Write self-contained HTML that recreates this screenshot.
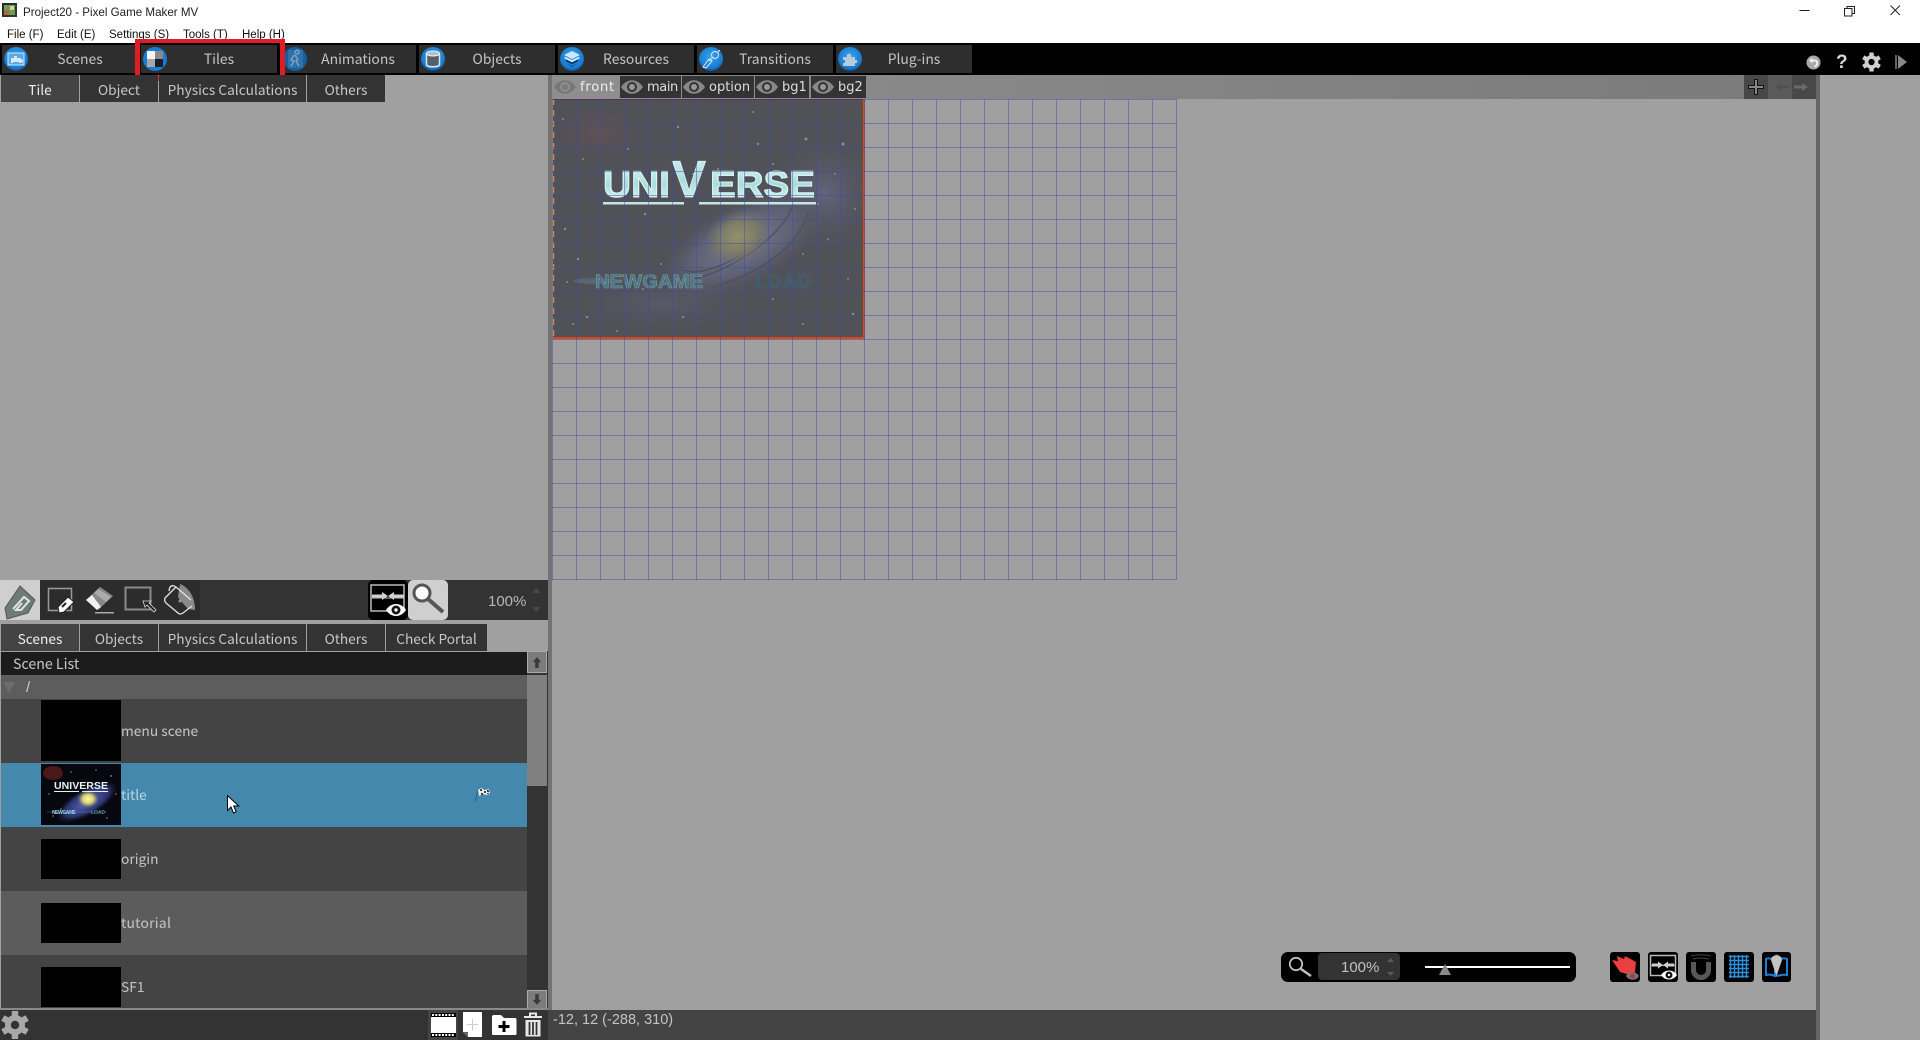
<!DOCTYPE html>
<html lang="en">
<head>
<meta charset="utf-8">
<title>Project20 - Pixel Game Maker MV</title>
<style>
html,body{margin:0;padding:0;width:1920px;height:1040px;overflow:hidden;background:#a0a0a0;font-family:"Liberation Sans",sans-serif}
div,span,svg{position:absolute;box-sizing:border-box}
.t{white-space:nowrap;line-height:1}
.menu{top:28px;font-size:11.500px;color:#111;line-height:15px;white-space:nowrap;font-family:"Liberation Sans",sans-serif}
.tab{top:45px;height:28px;width:136px;background:#2e2e2e}
.tab span{top:0;left:38px;width:80px;text-align:center;color:#c4c4c4;font:13.900px/28px "Noto Sans CJK JP","Liberation Sans",sans-serif;white-space:nowrap}
.ic{top:47px;width:24px;height:24px}
.sub{height:27px;background:#333;color:#c8c8c8;text-align:center;font:13.700px/28px "Noto Sans CJK JP","Liberation Sans",sans-serif;white-space:nowrap}
.lay{top:76px;height:22px;background:#333;color:#ddd;font:13px/21px "DejaVu Sans",sans-serif;white-space:nowrap}
.lay span{top:1px;line-height:21px}
.lay svg{top:3px;left:0;width:24px;height:16px}
.row{left:1px;width:526px}
.row span{left:120px;top:0;font:13.800px "Noto Sans CJK JP","Liberation Sans",sans-serif;color:#c6c6c6;white-space:nowrap}
.th{left:40px;width:80px;background:#000}
.btn{top:952px;width:30px;height:30px;background:#000;border-radius:3px}
</style>
</head>
<body>
<svg width="0" height="0" style="left:0;top:0">
<defs>
<radialGradient id="blue" cx="50%" cy="40%" r="60%"><stop offset="0" stop-color="#3aa4ee"/><stop offset=".8" stop-color="#1a7bd0"/><stop offset="1" stop-color="#0d4f96"/></radialGradient>
<linearGradient id="uni" x1="0" y1="0" x2="0" y2="1"><stop offset="0" stop-color="#d8f4f4"/><stop offset=".5" stop-color="#a8dcdc"/><stop offset="1" stop-color="#e6fafa"/></linearGradient>
<radialGradient id="gal" cx="50%" cy="50%" r="50%"><stop offset="0" stop-color="#75788c"/><stop offset=".6" stop-color="#5e6174"/><stop offset="1" stop-color="#55566000"/></radialGradient>
<radialGradient id="core" cx="50%" cy="50%" r="50%"><stop offset="0" stop-color="#93916c"/><stop offset=".55" stop-color="#7d7c68"/><stop offset="1" stop-color="#6a6a7000"/></radialGradient>
<radialGradient id="neb" cx="50%" cy="50%" r="50%"><stop offset="0" stop-color="#666a88"/><stop offset="1" stop-color="#55566000"/></radialGradient>
<radialGradient id="red" cx="50%" cy="50%" r="50%"><stop offset="0" stop-color="#625256"/><stop offset="1" stop-color="#55505400"/></radialGradient>
<radialGradient id="gal2" cx="50%" cy="50%" r="50%"><stop offset="0" stop-color="#5a68c0"/><stop offset=".7" stop-color="#2a3068"/><stop offset="1" stop-color="#0a0a1800"/></radialGradient>
<radialGradient id="core2" cx="50%" cy="50%" r="50%"><stop offset="0" stop-color="#fffcb0"/><stop offset=".5" stop-color="#d8d070"/><stop offset="1" stop-color="#80805000"/></radialGradient>
</defs>
</svg>

<!-- Title bar -->
<div style="left:0;top:0;width:1920px;height:43px;background:#fff"></div>
<svg style="left:2px;top:3px" width="15" height="14" viewBox="0 0 15 14"><rect width="15" height="14" fill="#2c3a2c"/><rect x="2" y="2" width="11" height="10" fill="#6f9a58"/><rect x="2" y="7" width="5" height="5" fill="#a86a38"/><rect x="8" y="3" width="4" height="4" fill="#d8d0a0"/><path d="M0 0v14M3 0v2M6 0v2M9 0v2M12 0v2" stroke="#111"/></svg>
<div class="t" style="left:23px;top:6px;font-size:11.600px;line-height:14px;color:#222">Project20 - Pixel Game Maker MV</div>
<div class="menu" style="left:7px">File (F)</div>
<div class="menu" style="left:57px">Edit (E)</div>
<div class="menu" style="left:109px">Settings (S)</div>
<div class="menu" style="left:183px">Tools (T)</div>
<div class="menu" style="left:242px">Help (H)</div>
<svg style="left:1790px;top:0" width="130" height="24" viewBox="0 0 130 24" fill="none" stroke="#222" stroke-width="1"><path d="M9.500 10.500h10"/><rect x="54.500" y="8.500" width="7.500" height="7.500" fill="#fff"/><path d="M57 8.500V6.500h7.500V13.500H62"/><path d="M100.500 5.500l9.500 9.500M110 5.500l-9.500 9.500"/></svg>

<!-- Black toolbar -->
<div style="left:0;top:43px;width:1920px;height:32px;background:#000"></div>
<div class="tab" style="left:2px"><span>Scenes</span></div>
<div class="tab" style="left:141px"><span>Tiles</span></div>
<div class="tab" style="left:280px"><span>Animations</span></div>
<div class="tab" style="left:419px"><span>Objects</span></div>
<div class="tab" style="left:558px"><span>Resources</span></div>
<div class="tab" style="left:697px"><span>Transitions</span></div>
<div class="tab" style="left:836px"><span>Plug-ins</span></div>

<svg class="ic" style="left:4px" viewBox="0 0 24 24"><circle cx="12" cy="12" r="12" fill="url(#blue)"/><rect x="4" y="6" width="16" height="12" fill="#5aa8e4" stroke="#cfe9fb"/><path d="M7 16v-5h3v-2h3v2h4v2l2-1v4l-2-1v1h-2v-1h-6v1z" fill="#d8eafa"/></svg>
<svg class="ic" style="left:143px" viewBox="0 0 24 24"><circle cx="12" cy="12" r="12" fill="#1a7bd0"/><rect x="4" y="4" width="8" height="8" fill="#f4f4f4"/><rect x="12" y="4" width="8" height="8" fill="#8a8a8a"/><rect x="4" y="12" width="8" height="8" fill="#a8a8a8"/><rect x="12" y="12" width="8" height="8" fill="#1d1d2a"/></svg>
<svg class="ic" style="left:283px" viewBox="0 0 24 24"><circle cx="12" cy="12" r="12" fill="#14609f"/><rect x="5" y="3" width="15" height="18" fill="#2f72aa"/><path d="M12 5a2 2 0 1 1 0 .1M11 8l-3 5 3 1-3 5M12 8l3 5-2 1 3 5" stroke="#7ea6c6" stroke-width="1.400" fill="none"/></svg>
<svg class="ic" style="left:421px" viewBox="0 0 24 24"><circle cx="12" cy="12" r="12" fill="url(#blue)"/><path d="M5.500 6.500v11c0 3 13 3 13 0v-11" fill="#54606c" stroke="#dfe7ee" stroke-width="1.500"/><ellipse cx="12" cy="6.500" rx="6.500" ry="2.500" fill="#b4bec8" stroke="#eef2f6"/></svg>
<svg class="ic" style="left:560px" viewBox="0 0 24 24"><circle cx="12" cy="12" r="12" fill="url(#blue)"/><path d="M12 4l8 4-8 4-8-4z" fill="#cfe6f7"/><path d="M4 11l8 4 8-4-1.500-1-6.500 3.200L5.500 10z" fill="#e8f4fc"/><path d="M5 14l7 3.500 7-3.500-2-1-5 2.500L7 13z" fill="#0e3b66"/><path d="M6 16l6 3 6-3-6 4z" fill="#0e3b66"/></svg>
<svg class="ic" style="left:699px" viewBox="0 0 24 24"><circle cx="12" cy="12" r="12" fill="url(#blue)"/><g fill="none" stroke="#d8ecfa" stroke-width="1"><path d="M4 20l6-8 3 2-6 7z"/><circle cx="16" cy="8" r="3.500"/><path d="M13 11l-3 3M19 5l2-2"/></g></svg>
<svg class="ic" style="left:838px" viewBox="0 0 24 24"><circle cx="12" cy="12" r="12" fill="url(#blue)"/><path d="M5 10h4v-1c-1-3 5-3 4 0v1h4v3c3-1 3 4 0 3v3h-12v-3c3 1 3-4 0-3z" fill="#b8cbdb"/></svg>

<!-- Red highlight -->
<div style="left:135px;top:39px;width:150px;height:42px;border:solid #e01c24;border-width:4px 5px 5px 5px"></div>

<!-- Right icons in toolbar -->
<svg style="left:1806px;top:55px" width="15" height="15" viewBox="0 0 15 15"><circle cx="7.500" cy="7.500" r="7" fill="#a8a8a8"/><path d="M4 5.500h5c3 0 3 5-.5 6" fill="none" stroke="#eee" stroke-width="2"/><path d="M6.500 2.500v6L3 5.500z" fill="#eee"/></svg>
<div class="t" style="left:1836px;top:52px;font:bold 19px/22px 'Liberation Sans',sans-serif;color:#d8d8d8">?</div>
<svg style="left:1862px;top:52px" width="19" height="20" viewBox="-10 -10 20 20"><g fill="#d0d0d0"><circle r="7.200"/><rect x="-2.300" y="-10" width="4.600" height="20"/><rect x="-2.300" y="-10" width="4.600" height="20" transform="rotate(60)"/><rect x="-2.300" y="-10" width="4.600" height="20" transform="rotate(120)"/></g><circle r="3.300" fill="#000"/></svg>
<svg style="left:1895px;top:54px" width="13" height="16" viewBox="0 0 13 16"><rect x="0" y="1" width="2" height="14" fill="#666"/><path d="M3 1l9 7-9 7z" fill="#888"/></svg>

<!-- Left top area -->
<div class="sub" style="left:1px;top:75px;width:78px;background:#444;color:#eee">Tile</div>
<div class="sub" style="left:80px;top:75px;width:78px">Object</div>
<div class="sub" style="left:159px;top:75px;width:147px">Physics Calculations</div>
<div class="sub" style="left:307px;top:75px;width:78px">Others</div>

<!-- Divider -->
<div style="left:548px;top:75px;width:4px;height:935px;background:#737373"></div>

<!-- Layer tabs row -->
<div style="left:552px;top:75px;width:1264px;height:24px;background:linear-gradient(90deg,#8e8e8e,#7a7a7a)"></div>
<div class="lay" style="left:553px;width:65px;background:#8e8e8e;color:#f0f0f0"><svg viewBox="0 0 24 16"><path d="M1 8c6-9 16-9 22 0-6 9-16 9-22 0z" fill="#777"/><circle cx="12" cy="8" r="5" fill="#8e8e8e"/><circle cx="12" cy="8" r="3" fill="#7a7a7a"/></svg><span style="left:27px;letter-spacing:.8px">front</span></div>
<div class="lay" style="left:620px;width:61px"><svg viewBox="0 0 24 16"><path d="M1 8c6-9 16-9 22 0-6 9-16 9-22 0z" fill="#888"/><circle cx="12" cy="8" r="5" fill="#333"/><circle cx="12" cy="8" r="3" fill="#999"/></svg><span style="left:27px;letter-spacing:-.4px">main</span></div>
<div class="lay" style="left:682px;width:72px"><svg viewBox="0 0 24 16"><path d="M1 8c6-9 16-9 22 0-6 9-16 9-22 0z" fill="#888"/><circle cx="12" cy="8" r="5" fill="#333"/><circle cx="12" cy="8" r="3" fill="#999"/></svg><span style="left:27px">option</span></div>
<div class="lay" style="left:755px;width:54px"><svg viewBox="0 0 24 16"><path d="M1 8c6-9 16-9 22 0-6 9-16 9-22 0z" fill="#888"/><circle cx="12" cy="8" r="5" fill="#333"/><circle cx="12" cy="8" r="3" fill="#999"/></svg><span style="left:27px">bg1</span></div>
<div class="lay" style="left:811px;width:55px"><svg viewBox="0 0 24 16"><path d="M1 8c6-9 16-9 22 0-6 9-16 9-22 0z" fill="#888"/><circle cx="12" cy="8" r="5" fill="#333"/><circle cx="12" cy="8" r="3" fill="#999"/></svg><span style="left:27px">bg2</span></div>

<!-- Layer right buttons -->
<div style="left:1744px;top:75px;width:24px;height:24px;background:#484848"></div>
<div style="left:1768px;top:75px;width:24px;height:24px;background:#5a5a5a"></div>
<div style="left:1792px;top:75px;width:24px;height:24px;background:#484848"></div>
<svg style="left:1744px;top:75px" width="72" height="24" viewBox="0 0 72 24"><path d="M10.500 4.500h3v6h6v3h-6v6h-3v-6h-6v-3h6z" fill="#888" stroke="#111"/><path d="M32 12l6-4v2.500h7v3h-7V16z" fill="#505050"/><path d="M64 12l-6-4v2.500h-8v3h8V16z" fill="#6a6a6a"/></svg>

<!-- Right divider -->
<div style="left:1816px;top:75px;width:4px;height:965px;background:#666"></div>

<!-- Canvas image -->
<svg style="left:553px;top:99px" width="312" height="240" viewBox="0 0 312 240">
<rect width="312" height="240" fill="#515158"/>
<ellipse cx="45" cy="33" rx="45" ry="28" fill="url(#red)"/>
<ellipse cx="272" cy="95" rx="55" ry="55" fill="url(#neb)" opacity=".8"/>
<ellipse cx="190" cy="145" rx="95" ry="42" fill="url(#gal)" transform="rotate(-28 190 145)"/>
<ellipse cx="110" cy="205" rx="90" ry="25" fill="url(#neb)" opacity=".4"/>
<path d="M140 180c30-5 90-40 100-75M160 188c35-10 85-35 95-75M128 170c20 10 60-10 80-30" fill="none" stroke="#50515e" stroke-width="1.500"/>
<ellipse cx="185" cy="138" rx="36" ry="27" fill="url(#core)" transform="rotate(-25 185 138)"/>
<g fill="#8a8a92"><circle cx="10" cy="20" r="1"/><circle cx="30" cy="60" r="1"/><circle cx="125" cy="28" r="1.200"/><circle cx="75" cy="50" r="1"/><circle cx="140" cy="75" r="1"/><circle cx="205" cy="45" r="1.200"/><circle cx="220" cy="65" r="1"/><circle cx="253" cy="40" r="1.500"/><circle cx="290" cy="45" r="1.500"/><circle cx="282" cy="75" r="1"/><circle cx="265" cy="105" r="1"/><circle cx="302" cy="110" r="1"/><circle cx="12" cy="130" r="1.200"/><circle cx="25" cy="160" r="1.200"/><circle cx="92" cy="115" r="1.200"/><circle cx="14" cy="183" r="1"/><circle cx="20" cy="225" r="1"/><circle cx="34" cy="218" r="1.200"/><circle cx="64" cy="232" r="1"/><circle cx="130" cy="218" r="1.200"/><circle cx="250" cy="225" r="1"/><circle cx="300" cy="215" r="1.200"/><circle cx="295" cy="180" r="1"/><circle cx="220" cy="200" r="1"/><circle cx="165" cy="70" r="1"/><circle cx="200" cy="13" r="1"/><circle cx="275" cy="140" r="1"/><circle cx="250" cy="155" r="1"/><circle cx="90" cy="190" r="1"/><circle cx="108" cy="165" r="1"/></g>
<text x="50" y="98" font-family="Liberation Sans" font-weight="bold" font-size="37" textLength="67" lengthAdjust="spacingAndGlyphs" fill="url(#uni)" stroke="#d8f4f4" stroke-width="1.100">UNI</text>
<text x="119" y="98" font-family="Liberation Sans" font-weight="bold" font-size="52" textLength="34" lengthAdjust="spacingAndGlyphs" fill="url(#uni)" stroke="#d8f4f4" stroke-width=".8">V</text>
<text x="157" y="98" font-family="Liberation Sans" font-weight="bold" font-size="37" textLength="105" lengthAdjust="spacingAndGlyphs" fill="url(#uni)" stroke="#d8f4f4" stroke-width="1.100">ERSE</text>
<rect x="50" y="103" width="81" height="2.500" fill="#c4e6e8"/>
<rect x="146" y="103" width="117" height="2.500" fill="#c4e6e8"/>
<ellipse cx="42" cy="182" rx="22" ry="3" fill="#5d8a96" opacity=".4"/>
<text x="42" y="189" font-family="Liberation Sans" font-weight="bold" font-size="19" textLength="108" lengthAdjust="spacingAndGlyphs" fill="#4a7383" stroke="#789ea9" stroke-width=".6">NEWGAME</text>
<text x="202" y="189" font-family="Liberation Sans" font-weight="bold" font-size="19" textLength="56" lengthAdjust="spacingAndGlyphs" fill="#40586a" stroke="#4a6878" stroke-width=".6">LOAD</text>
<path d="M.500 0v240" stroke="#e8842a" stroke-width="1.500" stroke-dasharray="6 5"/>
<path d="M0 .500h312" stroke="#6e1e14"/>
<path d="M311 0v240" stroke="#e8420f" stroke-width="2" />
<path d="M0 239h312" stroke="#e8420f" stroke-width="2"/>
</svg>
<!-- Grid -->
<div style="left:552px;top:99px;width:625px;height:481px;background-image:linear-gradient(to right,rgba(60,75,165,.48) 1px,transparent 1px),linear-gradient(to bottom,rgba(60,75,165,.48) 1px,transparent 1px);background-size:24px 24px"></div>

<!-- Left bottom toolbar -->
<div style="left:0;top:580px;width:548px;height:40px;background:#333"></div>
<div style="left:0;top:580px;width:40px;height:40px;background:#cfcfcf"></div>
<div style="left:40px;top:580px;width:160px;height:40px;background:#2c2c2c"></div>
<svg style="left:0;top:580px" width="200" height="40" viewBox="0 0 200 40">
<path d="M5 28L20 6l15 14-7 13-21 6z" fill="#6d7b76" stroke="#555"/><path d="M13 29l11-12 5 4-8 9h-5l6-7" fill="none" stroke="#e4e4e4" stroke-width="2"/>
<rect x="48.500" y="8.500" width="23" height="22" fill="none" stroke="#9a9a9a" stroke-width="1.500"/>
<path d="M58 27l10-10 6 5-10 10-5 1z" fill="#fff" stroke="#222"/><path d="M62 27l4-4" stroke="#222" stroke-width="2"/>
<path d="M86 20l14-13 13 9-14 13z" fill="#888"/><path d="M86 20l6-5 9 12-4 3z" fill="#f2f2f2"/><path d="M98 9l13 8-5 5-12-9z" fill="#aaa"/><rect x="95" y="32" width="19" height="1.500" fill="#aaa"/>
<rect x="125.500" y="7.500" width="25" height="22" fill="none" stroke="#8a8a8a" stroke-width="2"/>
<path d="M143 21l2 6 2-2 7 7 2-2-7-7 2-2z" fill="#222" stroke="#ddd" stroke-width=".8"/>
<path d="M180 4C188 7 195 16 195 30L188 29L180 20L178 17z" fill="#8a8a8a"/>
<path d="M176 7L165 18Q164 21 166 23L178 33Q180 35 183 33L192 26M176 7Q170 3 169 11M176 7L191 20" fill="none" stroke="#e4e4e4" stroke-width="1.300"/><circle cx="180" cy="21" r="1.500" fill="#999"/>
</svg>
<div style="left:368px;top:580px;width:40px;height:40px;background:#000;border-radius:5px"></div>
<svg style="left:368px;top:580px" width="40" height="40" viewBox="0 0 40 40"><rect x="3" y="5" width="33" height="26" fill="none" stroke="#bbb" stroke-width="1.500"/><path d="M3 18h33" stroke="#bbb"/><path d="M20 16l-6-4v2.500H4v3h10V20zM20 16l6-4v2.500h10v3H26V20z" fill="#d0d0d0"/><path d="M18 30c5-8 15-8 20 0-5 8-15 8-20 0z" fill="#fff"/><circle cx="28" cy="30" r="4.500" fill="#111"/><circle cx="28" cy="30" r="1.700" fill="#fff"/></svg>
<div style="left:408px;top:580px;width:40px;height:40px;background:#cfcfcf;border-radius:5px"></div>
<svg style="left:408px;top:580px" width="40" height="40" viewBox="0 0 40 40"><circle cx="14" cy="13" r="8" fill="#fff" stroke="#555" stroke-width="3"/><path d="M20 19l15 13" stroke="#555" stroke-width="4"/></svg>
<div class="t" style="left:488px;top:594px;font:15px/16px 'Liberation Sans',sans-serif;color:#b8b8b8">100%</div>
<svg style="left:531px;top:586px" width="11" height="30" viewBox="0 0 11 30"><path d="M5.500 2l4 5h-8zM5.500 26l4-5h-8z" fill="#4a4a4a"/></svg>

<!-- Bottom tabs -->
<div style="left:0;top:620px;width:548px;height:4px;background:#a0a0a0"></div>
<div class="sub" style="left:1px;top:624px;width:78px;background:#444;color:#eee">Scenes</div>
<div class="sub" style="left:80px;top:624px;width:78px">Objects</div>
<div class="sub" style="left:159px;top:624px;width:147px">Physics Calculations</div>
<div class="sub" style="left:307px;top:624px;width:78px">Others</div>
<div class="sub" style="left:386px;top:624px;width:101px">Check Portal</div>

<!-- Scene list -->
<div style="left:1px;top:652px;width:526px;height:23px;background:#1c1c1c"></div>
<div class="t" style="left:13px;top:656px;font:14.200px/16px 'Noto Sans CJK JP','Liberation Sans',sans-serif;color:#c8c8c8">Scene List</div>
<div style="left:1px;top:675px;width:526px;height:24px;background:#5d5d5d"></div>
<svg style="left:3px;top:682px" width="12" height="11" viewBox="0 0 12 11"><path d="M0 0h12L6 11z" fill="#6c6c6c"/></svg>
<div class="t" style="left:26px;top:680px;font:15px/16px 'Liberation Sans',sans-serif;color:#ccc">/</div>

<div class="row" style="top:699px;height:64px;background:#444"><span style="top:21px;line-height:20px">menu scene</span></div>
<div class="row" style="top:763px;height:64px;background:#4488ad"><span style="top:21px;line-height:20px;color:#b8d4e4">title</span></div>
<div class="row" style="top:827px;height:64px;background:#444"><span style="top:21px;line-height:20px">origin</span></div>
<div class="row" style="top:891px;height:64px;background:#5c5c5c"><span style="top:21px;line-height:20px;letter-spacing:.3px">tutorial</span></div>
<div class="row" style="top:955px;height:54px;background:#444"><span style="top:21px;line-height:20px">SF1</span></div>

<div class="th" style="left:41px;top:700px;height:61px"></div>
<div class="th" style="left:41px;top:839px;height:40px"></div>
<div class="th" style="left:41px;top:903px;height:40px"></div>
<div class="th" style="left:41px;top:967px;height:40px"></div>
<svg style="left:41px;top:764px" width="80" height="61" viewBox="0 0 80 61">
<rect width="80" height="61" fill="#07070f"/>
<ellipse cx="12" cy="9" rx="10" ry="7" fill="#4a1818"/>
<ellipse cx="46" cy="38" rx="36" ry="14" fill="url(#gal2)" transform="rotate(-30 46 38)"/>
<ellipse cx="47" cy="35" rx="11" ry="9" fill="url(#core2)"/>
<g fill="#ccc"><circle cx="8" cy="30" r=".6"/><circle cx="20" cy="45" r=".6"/><circle cx="70" cy="12" r=".7"/><circle cx="75" cy="30" r=".6"/><circle cx="30" cy="8" r=".6"/><circle cx="55" cy="6" r=".6"/><circle cx="12" cy="52" r=".6"/><circle cx="66" cy="54" r=".6"/></g>
<text x="13" y="25" font-family="Liberation Sans" font-weight="bold" font-size="10" textLength="54" lengthAdjust="spacingAndGlyphs" fill="#e4f4f4">UNIVERSE</text>
<rect x="13" y="27" width="25" height="1" fill="#e4f4f4"/><rect x="41" y="27" width="26" height="1" fill="#e4f4f4"/>
<text x="11" y="50" font-family="Liberation Sans" font-weight="bold" font-size="5" textLength="24" fill="#9cd0e0">NEWGAME</text>
<text x="50" y="50" font-family="Liberation Sans" font-weight="bold" font-size="5" textLength="14" fill="#4c8aa8">LOAD</text>
<path d="M6 48h60" stroke="#6ab0d0" stroke-width=".6" opacity=".6"/>
</svg>
<svg style="left:475px;top:787px" width="16" height="16" viewBox="0 0 16 16"><path d="M0 15L3 3" stroke="#2e5e7a"/><path d="M3 3l3-2 4 2 4-1 1 5-4 1-3-1-4 2z" fill="#e8e8e8"/><path d="M5 2v2h2V2zM9 4v2h2V4zM6 6v2h2V6zM12 3v2h2V3zM12 6v1h2V6z" fill="#444"/></svg>
<svg style="left:227px;top:795px" width="13" height="19" viewBox="0 0 13 19"><path d="M.500.500v15l3.500-3.500 2.500 6 2.700-1.200-2.500-5.800h5z" fill="#fff" stroke="#000"/></svg>

<!-- Scrollbar -->
<div style="left:527px;top:651px;width:21px;height:358px;background:#333"></div>
<div style="left:527px;top:651px;width:20px;height:22px;background:#7c7c7c;border:1px solid #aaa"></div>
<svg style="left:532px;top:656px" width="10" height="13" viewBox="0 0 14 15"><path d="M7 0l6 7H9.500v8h-5V7H1z" fill="#3a3a3a"/></svg>
<div style="left:527px;top:675px;width:20px;height:111px;background:#808080"></div>
<div style="left:527px;top:990px;width:20px;height:19px;background:#7c7c7c;border:1px solid #aaa"></div>
<svg style="left:532px;top:993px" width="10" height="13" viewBox="0 0 14 15"><path d="M7 15l6-7H9.500V0h-5v8H1z" fill="#3a3a3a"/></svg>

<!-- Bottom bar -->
<div style="left:0;top:1008px;width:548px;height:2px;background:#8a8a8a"></div>
<div style="left:0;top:1010px;width:548px;height:30px;background:#333"></div>
<svg style="left:1px;top:1011px" width="28" height="28" viewBox="-14 -14 28 28"><g fill="#a8a8a8"><circle r="10"/><rect x="-3.200" y="-14" width="6.400" height="28"/><rect x="-3.200" y="-14" width="6.400" height="28" transform="rotate(60)"/><rect x="-3.200" y="-14" width="6.400" height="28" transform="rotate(120)"/></g><circle r="4.200" fill="#333"/></svg>
<div style="left:428px;top:1010px;width:30px;height:30px;background:#444"></div>
<svg style="left:431px;top:1013px" width="25" height="24" viewBox="0 0 25 24"><rect width="25" height="24" fill="#000"/><rect y="4" width="25" height="16" fill="#fff"/><path d="M1 2h23M1 22h23" stroke="#fff" stroke-width="2" stroke-dasharray="2 1.300"/></svg>
<svg style="left:463px;top:1012px" width="20" height="26" viewBox="0 0 20 26"><path d="M0 0h19v25H5l-5-5z" fill="#fff"/><path d="M9.500 7v11M4 12.500h11" stroke="#ccc"/><path d="M0 20h5v5z" fill="#666"/></svg>
<svg style="left:491px;top:1014px" width="26" height="22" viewBox="0 0 26 22"><path d="M1 3q0-2 2-2h7l3 3h11q1.500 0 1.500 2v14q0 1-1.500 1H2q-1 0-1-1z" fill="#fff"/><path d="M13 7v11M7.500 12.500h11" stroke="#000" stroke-width="3"/></svg>
<svg style="left:523px;top:1012px" width="20" height="26" viewBox="0 0 20 26"><path d="M1 5h18M7 4V1.500h6V4" fill="none" stroke="#e8e8e8" stroke-width="2"/><path d="M2.500 8h15v16.500h-15z" fill="#e8e8e8"/><path d="M6.500 10v13M10 10v13M13.500 10v13" stroke="#333" stroke-width="1.800"/></svg>

<!-- Status bar -->
<div style="left:548px;top:1010px;width:1268px;height:30px;background:#444"></div>
<div class="t" style="left:553px;top:1012px;font:14.500px/16px 'Liberation Sans',sans-serif;color:#c4c4c4">-12, 12 (-288, 310)</div>

<!-- Zoom control -->
<div style="left:1281px;top:952px;width:295px;height:30px;background:#000;border-radius:7px"></div>
<svg style="left:1287px;top:956px" width="26" height="24" viewBox="0 0 26 24"><circle cx="9" cy="8" r="6.200" fill="none" stroke="#c0c0c0" stroke-width="1.800"/><path d="M14 13l10 7" stroke="#c0c0c0" stroke-width="2.500"/></svg>
<div style="left:1318px;top:953px;width:82px;height:27px;background:#333;border-radius:4px"></div>
<div class="t" style="left:1341px;top:960px;font:15px/16px 'Liberation Sans',sans-serif;color:#c0c0c0">100%</div>
<svg style="left:1385px;top:957px" width="11" height="20" viewBox="0 0 11 20"><path d="M5.500 1l3.500 4h-7zM5.500 19l3.500-4h-7z" fill="#5a5a5a"/></svg>
<div style="left:1425px;top:966px;width:145px;height:2px;background:#fff"></div>
<svg style="left:1439px;top:964px" width="12" height="12" viewBox="0 0 12 12"><path d="M6 0l6 11H0z" fill="#888"/></svg>

<!-- Bottom right icon buttons -->
<div class="btn" style="left:1610px"></div>
<svg style="left:1610px;top:952px" width="30" height="30" viewBox="0 0 30 30"><path d="M2 8l6 1-1-5 7 3 1-3 11 6-1 10-5 3-10-3z" fill="#e84040"/><path d="M16 24c3-5 10-5 13 0-3 5-10 5-13 0z" fill="#777"/><circle cx="22.500" cy="24" r="2.500" fill="#a04040"/></svg>
<div class="btn" style="left:1648px"></div>
<svg style="left:1648px;top:952px" width="30" height="30" viewBox="0 0 30 30"><rect x="2.500" y="3.500" width="25" height="20" fill="none" stroke="#bbb" stroke-width="1.500"/><path d="M2 13.500h26" stroke="#bbb"/><path d="M15 13l-5-3.500v2H4v3h6v2zM15 13l5-3.500v2h6v3h-6v2z" fill="#d0d0d0"/><path d="M13 23c4-6 12-6 16 0-4 6-12 6-16 0z" fill="#fff"/><circle cx="21" cy="23" r="3.500" fill="#111"/><circle cx="21" cy="23" r="1.200" fill="#fff"/></svg>
<div class="btn" style="left:1686px"></div>
<svg style="left:1686px;top:952px" width="30" height="30" viewBox="0 0 30 30"><path d="M7.500 10v8a7.500 7.500 0 0 0 15 0V10" fill="none" stroke="#585858" stroke-width="5"/><path d="M5 4q10-2.500 20 0M7 7q8-2 16 0" fill="none" stroke="#444"/></svg>
<div class="btn" style="left:1724px"></div>
<svg style="left:1724px;top:952px" width="30" height="30" viewBox="0 0 30 30"><path d="M5 4.500h20M5 8.500h20M5 12.500h20M5 16.500h20M5 20.500h20M5 24.500h20M6.500 3v23M10.500 3v23M14.500 3v23M18.500 3v23M22.500 3v23" stroke="#2d8fdc" stroke-width="1.500"/></svg>
<div class="btn" style="left:1762px;width:29px"></div>
<svg style="left:1762px;top:952px" width="29" height="30" viewBox="0 0 29 30"><path d="M4 7c4-2 6 1 9 1v16c-3-1-5-2-9-1z M13 8c3 0 7-3 12-1v16c-4-1-8 1-12 1z" fill="none" stroke="#1f7ed4" stroke-width="2"/><path d="M9 8a5.500 5 0 1 1 11 0l-5.500 16z" fill="#c4c4c4"/><path d="M11 4q4-3 7 0" stroke="#222" fill="none"/></svg>
</body>
</html>
